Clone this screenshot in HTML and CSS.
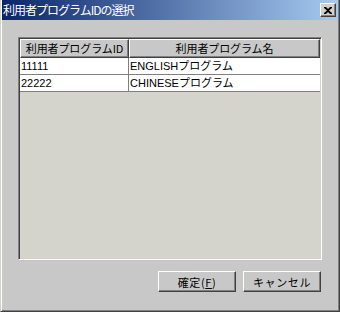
FILE: index.html
```html
<!DOCTYPE html>
<html lang="ja">
<head>
<meta charset="utf-8">
<link rel="stylesheet" href="styles.css">
</head>
<body>
<div class="window">
  <div class="titlebar">
    <span class="title">利用者プログラムIDの選択</span>
    <span class="close"><svg width="8" height="7" viewBox="0 0 8 7"><path d="M0 0h2l2 2 2-2h2v1L5 3.5 8 6v1H6L4 5 2 7H0V6l3-2.5L0 1z" fill="#000"/></svg></span>
  </div>
  <div class="body">
    <div class="table">
      <div class="row head">
        <div class="hcell c1">利用者プログラムID</div>
        <div class="hcell c2">利用者プログラム名</div>
      </div>
      <div class="row">
        <div class="cell c1">11111</div>
        <div class="cell c2">ENGLISHプログラム</div>
      </div>
      <div class="row">
        <div class="cell c1">22222</div>
        <div class="cell c2">CHINESEプログラム</div>
      </div>
    </div>
    <div class="buttons">
      <button class="btn">確定(<u>F</u>)</button>
      <button class="btn">キャンセル</button>
    </div>
  </div>
</div>
</body>
</html>
```
FILE: styles.css
```css
html, body {
  margin: 0;
  padding: 0;
}
body {
  width: 340px;
  height: 312px;
  overflow: hidden;
  font-family: "Liberation Sans", "Noto Sans CJK JP", sans-serif;
  font-size: 11px;
  color: #000;
}
.window {
  width: 340px;
  height: 312px;
  box-sizing: border-box;
  background: #c8c8c8;
  border-left: 1px solid #d4d0c8;
  border-right: 1px solid #404040;
  border-bottom: 1px solid #404040;
  box-shadow: inset 1px 0 #fff, inset -1px -1px #808080;
  display: flex;
  flex-direction: column;
  padding: 0 1px 1px 1px;
}
.titlebar {
  height: 20px;
  flex: none;
  background: linear-gradient(to right, #0a246a, #a6caf0);
  display: flex;
  align-items: center;
  justify-content: space-between;
  padding: 0 2px 0 1px;
}
.title {
  color: #fff;
  font-size: 12px;
  font-family: "Noto Sans CJK JP", sans-serif;
  line-height: 20px;
  letter-spacing: -1px;
}
.close {
  width: 16px;
  height: 14px;
  box-sizing: border-box;
  background: #d4d0c8;
  border-top: 1px solid #fff;
  border-left: 1px solid #fff;
  border-right: 1px solid #404040;
  border-bottom: 1px solid #404040;
  box-shadow: inset -1px -1px #808080;
  display: flex;
  align-items: center;
  justify-content: center;
}
.body {
  flex: 1;
  display: flex;
  flex-direction: column;
  padding: 17px 16px 0 16px;
}
.table {
  height: 223px;
  box-sizing: border-box;
  background: #d4d4cc;
  border-top: 1px solid #808080;
  border-left: 1px solid #808080;
  border-right: 1px solid #fff;
  border-bottom: 1px solid #fff;
  box-shadow: inset 1px 1px #404040, inset -1px -1px #d4d0c8;
  padding: 1px;
}
.row {
  display: flex;
  height: 17px;
  background: #fff;
  border-bottom: 1px solid #808080;
  box-sizing: border-box;
}
.row.head {
  height: 19px;
  background: #c8c8c8;
  border-bottom: 0;
}
.c1 { width: 109px; }
.c2 { flex: 1; }
.hcell {
  box-sizing: border-box;
  border-top: 1px solid #fff;
  border-left: 1px solid #fff;
  border-right: 1px solid #404040;
  border-bottom: 1px solid #404040;
  box-shadow: inset -1px -1px #808080;
  text-align: center;
  line-height: 16px;
  font-family: "Noto Sans CJK JP", sans-serif;
  letter-spacing: -0.1px;
}
.cell {
  box-sizing: border-box;
  padding-left: 1px;
  line-height: 16px;
  font-size: 11px;
}
.cell.c1 {
  border-right: 1px solid #808080;
}
.buttons {
  display: flex;
  justify-content: flex-end;
  gap: 7px;
  margin-top: 11px;
  padding-right: 1px;
}
.btn {
  width: 78px;
  height: 21px;
  margin: 0;
  padding: 0;
  box-sizing: border-box;
  background: #c8c8c8;
  border-top: 1px solid #fff;
  border-left: 1px solid #fff;
  border-right: 1px solid #404040;
  border-bottom: 1px solid #404040;
  box-shadow: inset -1px -1px #808080;
  font-family: "Noto Sans CJK JP", sans-serif;
  font-size: 11px;
  color: #000;
  letter-spacing: 0.6px;
}
```
